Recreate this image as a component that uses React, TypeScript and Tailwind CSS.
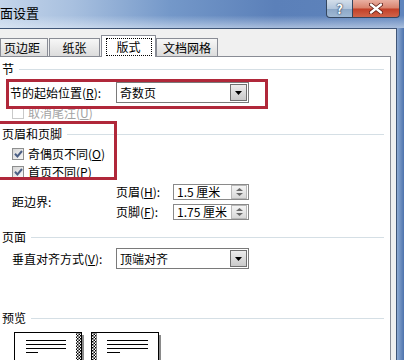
import React from 'react';

const fontCls = "font-['Noto_Sans_CJK_SC','Liberation_Sans',sans-serif]";

// section title with the thin rule after it
const SectionHeader = ({ label, className }: { label: string; className: string }) => (
  <div className={`flex h-[14px] items-center ${className}`}>
    <span className="text-[12px] leading-none text-black">{label}</span>
    <div className="ml-[5px] mr-[6px] h-px flex-1 bg-[#d5dfe5]" />
  </div>
);

const DropArrow = () => (
  <div className="flex h-[17px] w-[17px] items-center justify-center border border-[#6f6f6f] bg-[linear-gradient(#ececec,#c9c9c9)]">
    <svg width="7" height="4" viewBox="0 0 7 4">
      <path d="M0 0h7L3.5 4z" fill="#000" />
    </svg>
  </div>
);

const Select = ({ value }: { value: string }) => (
  <div className="flex h-[21px] w-[133px] items-center border border-[#7a7a7a] bg-white pr-px">
    <span className="flex-1 pl-[3px] text-[12px] leading-none">{value}</span>
    <DropArrow />
  </div>
);

const Spinner = () => (
  <div className="flex h-[14px] w-[16px] shrink-0 flex-col items-center justify-center gap-[2px] border border-[#b8b8b8] bg-[linear-gradient(#f4f4f4,#d8d8d8)]">
    <svg width="7" height="3" viewBox="0 0 7 3">
      <path d="M0 3h7L3.5 0z" fill="#6a6a6a" />
    </svg>
    <svg width="7" height="3" viewBox="0 0 7 3">
      <path d="M0 0h7L3.5 3z" fill="#6a6a6a" />
    </svg>
  </div>
);

const NumberInput = ({ value }: { value: string }) => (
  <div className="flex h-[16px] w-[76px] items-center overflow-hidden border border-[#8a8a8a] bg-white pr-px">
    <span className="flex-1 whitespace-nowrap pl-[3px] text-[12px] leading-none">{value}</span>
    <Spinner />
  </div>
);

const Checkbox = ({ checked, disabled }: { checked?: boolean; disabled?: boolean }) => (
  <div
    className={`flex h-[12px] w-[12px] items-center justify-center border ${
      disabled ? 'border-[#c9c9c9] bg-white' : 'border-[#8e8f8f] bg-[linear-gradient(135deg,#d6d6d6,#f7f7f7)]'
    }`}
  >
    {checked && (
      <svg width="9" height="8" viewBox="0 0 9 8">
        <path d="M1 3.8l2.4 2.6L8 1" stroke="#4b5f85" strokeWidth="2" fill="none" />
      </svg>
    )}
  </div>
);

const PreviewPages = () => (
  <svg width="150" height="30" viewBox="0 0 150 30">
    <defs>
      <pattern id="ck" width="3" height="3" patternUnits="userSpaceOnUse">
        <rect width="3" height="3" fill="#fff" />
        <rect width="1.5" height="1.5" fill="#000" />
        <rect x="1.5" y="1.5" width="1.5" height="1.5" fill="#000" />
      </pattern>
    </defs>
    {/* left page */}
    <rect x="68" y="3" width="2" height="30" fill="#8a8a8a" />
    <rect x="0.5" y="0.5" width="67" height="40" fill="#fff" stroke="#000" />
    <rect x="62" y="1" width="5" height="39" fill="url(#ck)" />
    <path d="M12 8.5h40M12 12.5h40M12 16.5h40M12 20.5h12" stroke="#000" strokeWidth="1.2" />
    {/* right page */}
    <rect x="145" y="3" width="2" height="30" fill="#8a8a8a" />
    <rect x="77.5" y="0.5" width="67" height="40" fill="#fff" stroke="#000" />
    <rect x="78" y="1" width="5" height="39" fill="url(#ck)" />
    <path d="M93 8.5h41M93 12.5h41M93 16.5h41M93 20.5h13" stroke="#000" strokeWidth="1.2" />
  </svg>
);

const TitleBar = () => (
  <div className="flex h-[28px] shrink-0 bg-[linear-gradient(180deg,rgba(255,255,255,0)_55%,rgba(230,238,248,0.55)_100%),linear-gradient(90deg,#c4d5ea_0%,#a8c0df_18%,#7498c9_42%,#5b80b9_68%,#5f84bc_100%)]">
    <span className="pl-0 pt-[6px] text-[13px] leading-none text-black">面设置</span>
    <div className="ml-auto mr-[4px] flex h-[18px]">
      <div className="flex w-[27px] items-center justify-center rounded-bl-[4px] border border-t-0 border-[#34465f] bg-[linear-gradient(#d3deea_0%,#b3c6dc_50%,#8ba6c6_51%,#9fb8d4_100%)]">
        <span className="text-[13px] font-bold leading-none text-white [text-shadow:0_0_2px_#1e2f4a,0_0_1px_#1e2f4a]">?</span>
      </div>
      <div className="flex w-[47px] items-center justify-center rounded-br-[4px] border border-l-0 border-t-0 border-[#34465f] bg-[linear-gradient(#e9b0a2_0%,#d8826c_48%,#c23f27_52%,#d0644a_100%)]">
        <svg width="14" height="11" viewBox="0 0 14 11">
          <path d="M2 1.5l10 8M12 1.5l-10 8" stroke="#5a1a12" strokeWidth="4" strokeLinecap="round" />
          <path d="M2 1.5l10 8M12 1.5l-10 8" stroke="#fff" strokeWidth="2.4" strokeLinecap="round" />
        </svg>
      </div>
    </div>
  </div>
);

const Tab = ({ label, width, className }: { label: string; width: string; className: string }) => (
  <div
    className={`flex h-[18px] items-center justify-center border border-b-0 border-[#898c95] bg-[linear-gradient(#f7f7f7,#dcdcdc)] text-[12px] leading-none ${width} ${className}`}
  >
    {label}
  </div>
);

export default function App() {
  return (
    <div className={`relative flex h-[360px] w-[404px] flex-col overflow-hidden bg-[#5b80b9] text-black ${fontCls}`}>
      <TitleBar />

      <div className="flex min-h-0 flex-1">
        <div className="flex w-[397px] flex-col border-r border-t border-[#3f5576] bg-[#f0f0f0]">
          {/* tabs */}
          <div className="flex h-[27px] shrink-0 items-end">
            <Tab label="页边距" width="w-[48px]" className="justify-start pl-[3px]" />
            <Tab label="纸张" width="w-[51px]" className="ml-px" />
            <div className="relative z-10 -mb-px ml-px flex h-[22px] w-[55px] items-center justify-center border border-b-0 border-[#898c95] bg-white">
              <div className="flex h-[18px] w-[46px] items-center justify-center border border-dotted border-black text-[12px] leading-none">
                版式
              </div>
            </div>
            <Tab label="文档网格" width="w-[62px]" className="" />
          </div>

          {/* panel */}
          <div className="mr-[5px] flex flex-1 flex-col border-r border-t border-[#898c95] bg-white pl-[2px] text-[12px] leading-none">
            <SectionHeader label="节" className="mt-[5px]" />

            <div className="mt-[6px] flex h-[21px] items-center">
              <span className="ml-[8px] w-[106px]">
                节的起始位置(<span className="underline">R</span>):
              </span>
              <Select value="奇数页" />
            </div>

            <div className="mt-[3px] flex h-[14px] items-center text-[#a3a3a3]">
              <div className="ml-[10px]">
                <Checkbox disabled />
              </div>
              <span className="ml-[4px]">
                取消尾注(<span className="underline">U</span>)
              </span>
            </div>

            <SectionHeader label="页眉和页脚" className="mt-[7px]" />

            <div className="mt-[6px] flex h-[14px] items-center">
              <div className="ml-[10px]">
                <Checkbox checked />
              </div>
              <span className="ml-[4px]">
                奇偶页不同(<span className="underline">O</span>)
              </span>
            </div>
            <div className="mt-[4px] flex h-[14px] items-center">
              <div className="ml-[10px]">
                <Checkbox checked />
              </div>
              <span className="ml-[4px]">
                首页不同(<span className="underline">P</span>)
              </span>
            </div>

            <div className="mt-[5px] flex items-center">
              <span className="ml-[10px] w-[104px]">距边界:</span>
              <div className="flex flex-col gap-[4px]">
                <div className="flex items-center">
                  <span className="w-[57px]">
                    页眉(<span className="underline">H</span>):
                  </span>
                  <NumberInput value="1.5 厘米" />
                </div>
                <div className="flex items-center">
                  <span className="w-[57px]">
                    页脚(<span className="underline">F</span>):
                  </span>
                  <NumberInput value="1.75 厘米" />
                </div>
              </div>
            </div>

            <SectionHeader label="页面" className="mt-[10px]" />

            <div className="mt-[4px] flex h-[21px] items-center">
              <span className="ml-[10px] w-[104px]">
                垂直对齐方式(<span className="underline">V</span>):
              </span>
              <Select value="顶端对齐" />
            </div>

            <SectionHeader label="预览" className="mt-[42px]" />

            <div className="ml-[12px] mt-[7px]">
              <PreviewPages />
            </div>
          </div>
        </div>
        <div className="flex-1 bg-[linear-gradient(90deg,#8fabd3,#4d73ad)]" />
      </div>

      {/* red annotation boxes */}
      <div className="absolute left-[6px] top-[79px] h-[30px] w-[262px] border-[3px] border-[#b0283a]" />
      <div className="absolute left-[-3px] top-[121px] h-[59px] w-[120px] border-[3px] border-[#b0283a]" />
    </div>
  );
}
